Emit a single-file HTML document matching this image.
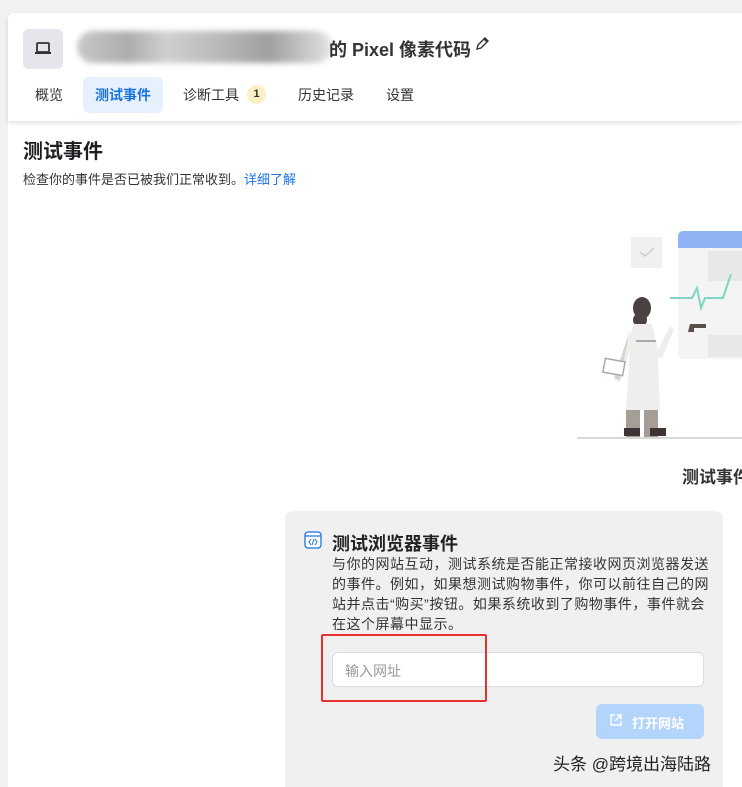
<!DOCTYPE html>
<html><head><meta charset="utf-8"><style>
*{margin:0;padding:0;box-sizing:border-box}
html,body{width:742px;height:787px;overflow:hidden}
body{background:#f0f1f2;font-family:"Liberation Sans","Noto Sans CJK SC",sans-serif;color:#1c1e21;position:relative}
.abs{position:absolute}
</style></head><body>
<div class="abs" style="left:8px;top:13px;width:734px;height:774px;background:#fff;border-radius:6px 0 0 0"></div>
<div class="abs" style="left:8px;top:13px;width:734px;height:108px;background:#fff;box-shadow:0 2px 4px rgba(0,0,0,.12);border-radius:6px 0 0 0"></div>
<div class="abs" style="left:23px;top:29px;width:40px;height:40px;background:#e4e6eb;border-radius:6px"></div>
<svg class="abs" style="left:34px;top:42px" width="18" height="14" viewBox="0 0 18 14"><rect x="3" y="1" width="12" height="9" rx="1" fill="none" stroke="#333" stroke-width="1.8"/><rect x="1" y="10" width="16" height="2" fill="#333"/></svg>
<div class="abs" style="left:77px;top:31px;width:255px;height:32px;background:linear-gradient(90deg,#bbb,#999 20%,#c4c4c4 35%,#aaa 55%,#888 75%,#bbb 90%,#ddd);border-radius:16px;filter:blur(3px);opacity:.8"></div>
<div class="abs" style="left:329px;top:36px;font-size:18px;font-weight:bold;color:#333">的 Pixel 像素代码</div>
<svg class="abs" style="left:474px;top:36px" width="16" height="16" viewBox="0 0 16 16"><path d="M3 13l1-4 7-7 3 3-7 7z M10 3l3 3" fill="none" stroke="#333" stroke-width="1.4"/></svg>
<div class="abs" style="left:83px;top:77px;width:80px;height:36px;background:#e7f0fd;border-radius:6px"></div>
<div class="abs" style="top:85px;left:35px;font-size:14px;color:#333">概览</div>
<div class="abs" style="top:85px;left:95px;font-size:14px;color:#1b74e4;font-weight:bold">测试事件</div>
<div class="abs" style="top:85px;left:183px;font-size:14px;color:#333">诊断工具</div>
<div class="abs" style="top:85px;left:247px;width:19px;height:19px;border-radius:50%;background:#fcefc6;font-size:11px;font-weight:bold;text-align:center;line-height:19px;color:#333">1</div>
<div class="abs" style="top:85px;left:298px;font-size:14px;color:#333">历史记录</div>
<div class="abs" style="top:85px;left:386px;font-size:14px;color:#333">设置</div>
<div class="abs" style="top:135px;left:23px;font-size:20px;font-weight:bold">测试事件</div>
<div class="abs" style="top:169px;left:23px;font-size:13px;color:#333">检查你的事件是否已被我们正常收到。<span style="color:#1b74e4">详细了解</span></div>
<div class="abs" style="left:631px;top:237px;width:31px;height:31px;background:#f0f0f0"></div>
<svg class="abs" style="left:638px;top:246px" width="18" height="12"><path d="M2 6l5 4 9-8" fill="none" stroke="#ccc" stroke-width="1.5"/></svg>
<div class="abs" style="left:678px;top:231px;width:64px;height:128px;background:#f4f4f4;border-radius:5px 0 0 5px;overflow:hidden"><div style="height:17px;background:#8fb4f5"></div><div style="position:absolute;left:30px;top:20px;width:34px;height:30px;background:#e8e8e8"></div><div style="position:absolute;left:30px;top:104px;width:34px;height:22px;background:#e8e8e8"></div></div>
<svg class="abs" style="left:670px;top:270px" width="72" height="50"><path d="M0 28h22l5-10 4 20 4-10h18l8-24" fill="none" stroke="#7fd6c2" stroke-width="2"/></svg>
<svg class="abs" style="left:600px;top:290px" width="112" height="150">
<ellipse cx="42" cy="18" rx="9" ry="11" fill="#4a4240"/><circle cx="40" cy="30" r="7" fill="#4a4240"/>
<path d="M34 34 L52 34 L58 60 L70 36 L74 40 L62 68 L58 68 L60 120 L26 120 L30 60 L20 92 L14 90 Z" fill="#efeeec"/>
<path d="M30 40 L20 90 L14 88 Z" fill="#d8d5d0"/>
<rect x="36" y="50" width="20" height="2" fill="#aaa"/>
<rect x="4" y="70" width="20" height="14" fill="#fff" stroke="#aaa" stroke-width="1.5" transform="rotate(10 14 77)"/>
<rect x="26" y="120" width="14" height="28" fill="#a49e96"/><rect x="44" y="120" width="14" height="28" fill="#a49e96"/>
<rect x="24" y="138" width="16" height="8" fill="#3d3534"/><rect x="50" y="138" width="16" height="8" fill="#3d3534"/>
<path d="M90 34 h16 v4 h-12 v4 h-6z" fill="#5a4e4c"/>
</svg>
<div class="abs" style="left:577px;top:437px;width:165px;height:2px;background:#d8d8d8"></div>
<div class="abs" style="left:682px;top:463px;font-size:17px;font-weight:bold;color:#333;white-space:nowrap">测试事件</div>
<div class="abs" style="left:285px;top:511px;width:438px;height:290px;background:#f0f0f0;border-radius:8px"></div>
<svg class="abs" style="left:304px;top:531px" width="18" height="18" viewBox="0 0 18 18"><rect x="1" y="1" width="16" height="16" rx="3" fill="#fff" stroke="#1b74e4" stroke-width="1.3"/><path d="M1 5h16" stroke="#1b74e4" stroke-width="1.2"/><path d="M7 8l-2 3 2 3M11 8l2 3-2 3M10 8l-2 6" fill="none" stroke="#1b74e4" stroke-width="1"/></svg>
<div class="abs" style="left:332px;top:530px;font-size:18px;font-weight:bold;color:#222">测试浏览器事件</div>
<div class="abs" style="left:332px;top:554px;width:400px;font-size:14px;line-height:20px;color:#333;letter-spacing:0.5px;white-space:nowrap">与你的网站互动，测试系统是否能正常接收网页浏览器发送<br>的事件。例如，如果想测试购物事件，你可以前往自己的网<br>站并点击“购买”按钮。如果系统收到了购物事件，事件就会<br>在这个屏幕中显示。</div>
<div class="abs" style="left:332px;top:652px;width:372px;height:35px;background:#fff;border:1px solid #dadde1;border-radius:6px;font-size:14px;color:#999;padding:8px 12px">输入网址</div>
<div class="abs" style="left:321px;top:634px;width:166px;height:68px;border:2px solid #e8302d;border-radius:2px"></div>
<div class="abs" style="left:596px;top:704px;width:108px;height:35px;background:#b3d4fb;border-radius:6px;color:#fff;font-size:13px;font-weight:bold;padding:9px 0 0 36px">打开网站</div>
<svg class="abs" style="left:609px;top:713px" width="14" height="14"><path d="M6 2H2v10h10V8M8 2h4v4M12 2L6 8" fill="none" stroke="#fff" stroke-width="1.5"/></svg>
<div class="abs" style="left:553px;top:750px;font-size:17px;color:#222;white-space:nowrap">头条 @跨境出海陆路</div>
</body></html>
